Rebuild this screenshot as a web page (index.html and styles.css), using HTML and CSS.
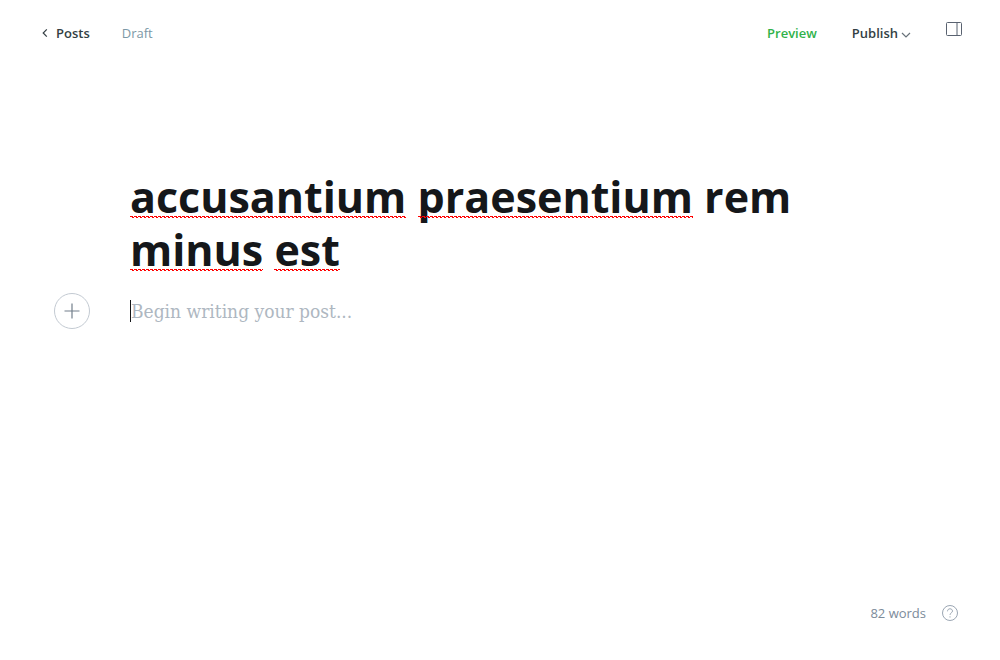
FILE: index.html
```html
<!DOCTYPE html>
<html lang="en">
<head>
<meta charset="utf-8">
<meta name="viewport" content="width=device-width, initial-scale=1">
<title>Post editor</title>
<link rel="stylesheet" href="styles.css">
</head>
<body>
<div class="editor">
  <header class="topbar">
    <nav class="crumbs">
      <a class="back" href="#">
        <svg class="back-icon" viewBox="0 0 6 10" aria-hidden="true"><path d="M4.8 1.3 1.2 5l3.6 3.7"/></svg>
        <span>Posts</span>
      </a>
      <span class="status">Draft</span>
    </nav>
    <div class="actions">
      <button class="preview" type="button">Preview</button>
      <button class="publish" type="button">
        <span>Publish</span>
        <svg class="chevron" viewBox="0 0 10 6" aria-hidden="true"><path d="M1 1l4 4 4-4"/></svg>
      </button>
      <button class="settings" type="button" aria-label="Settings">
        <svg class="settings-icon" viewBox="0 0 16 14" aria-hidden="true"><rect x=".5" y=".5" width="15" height="13" rx="1"/><path d="M11 .5v13"/></svg>
      </button>
    </div>
  </header>
  <main class="canvas">
    <h1 class="title"><span class="misspelt">accusantium</span> <span class="misspelt">praesentium</span> rem <span class="misspelt">minus</span> <span class="misspelt">est</span></h1>
    <div class="body-row">
      <button class="add" type="button" aria-label="Add a card">
        <svg class="add-icon" viewBox="0 0 16 16" aria-hidden="true"><path d="M8 .5v15M.5 8h15"/></svg>
      </button>
      <div class="field">
        <input class="post" type="text" placeholder="Begin writing your post..." aria-label="Post body">
      </div>
    </div>
  </main>
  <footer class="footer">
    <span>82 words</span>
    <a class="help" href="#" aria-label="Help">
      <svg class="help-icon" viewBox="0 0 16 16" aria-hidden="true"><circle cx="8" cy="8" r="7.5"/><path d="M5.5 6.3C5.5 4.7 6.6 3.8 8 3.8s2.5.9 2.5 2.3C10.5 7.800 8 7.900 8 9.900"/><path d="M8 11.300v1.200"/></svg>
    </a>
  </footer>
</div>
</body>
</html>
```
FILE: styles.css
```css
* { box-sizing: border-box; }

body {
  margin: 0;
  background: #fff;
  color: #343f44;
  font: 13px/22px "Segoe UI", "Open Sans", "Noto Sans", sans-serif;
}

button, input {
  margin: 0;
  padding: 0;
  border: 0;
  background: none;
  color: inherit;
  font: inherit;
}

a { color: inherit; text-decoration: none; }
svg { display: block; fill: none; stroke: currentColor; }

.editor {
  display: flex;
  flex-direction: column;
  min-height: 100vh;
}

.topbar {
  display: flex;
  justify-content: space-between;
  padding: 22px 38px 0 42px;
}

.crumbs, .actions { display: flex; align-items: flex-start; }
.crumbs { gap: 32px; }
.actions { gap: 35px; }

.back { display: flex; align-items: center; gap: 8px; font-weight: 600; }
.back-icon { width: 6px; height: 10px; stroke-width: 1.2; }
.status { color: #7c98a6; }

.preview { color: #30b24a; font-weight: 600; }
.publish { display: flex; align-items: center; gap: 3px; font-weight: 600; }
.chevron { width: 10px; height: 6px; margin-top: 4px; stroke: #68727a; stroke-width: 1.2; }
.settings { height: 14px; }
.settings-icon { width: 16px; height: 14px; color: #596270; }

.canvas {
  flex: 1;
  padding: 126px 130px 0;
}

.title {
  margin: 0;
  color: #15171a;
  font-size: 43px;
  line-height: 53px;
  font-weight: 700;
}

.misspelt { position: relative; }

/* Spell-check squiggle drawn over the descenders */
.misspelt::after {
  content: "";
  position: absolute;
  left: 0;
  right: 0;
  bottom: 8px;
  height: 2px;
  background: url("data:image/svg+xml,%3Csvg xmlns='http://www.w3.org/2000/svg' width='4' height='2'%3E%3Cpath d='M0 0h3v1H0zM2 1h2v1H2z' fill='red'/%3E%3C/svg%3E") repeat-x;
}

.body-row {
  display: flex;
  align-items: center;
  gap: 40px;
  margin: 17px 0 0 -76px;
}

.add {
  display: grid;
  place-items: center;
  width: 36px;
  height: 36px;
  border: 1px solid #c3cad2;
  border-radius: 50%;
  color: #727f8b;
}
.add-icon { width: 16px; height: 16px; stroke-width: 1.2; }

.field { flex: 1; height: 22px; border-left: 1px solid #15171a; }

.post {
  display: block;
  width: 100%;
  height: 22px;
  font: 19px/22px Georgia, "DejaVu Serif Condensed", "DejaVu Serif", serif;
}
.post::placeholder { color: #aeb7c1; opacity: 1; }

.footer {
  display: flex;
  justify-content: flex-end;
  align-items: center;
  gap: 16px;
  padding: 0 42px 36px;
  color: #7c8b9a;
}
.help-icon { width: 16px; height: 16px; color: #9ba6b3; }
```
